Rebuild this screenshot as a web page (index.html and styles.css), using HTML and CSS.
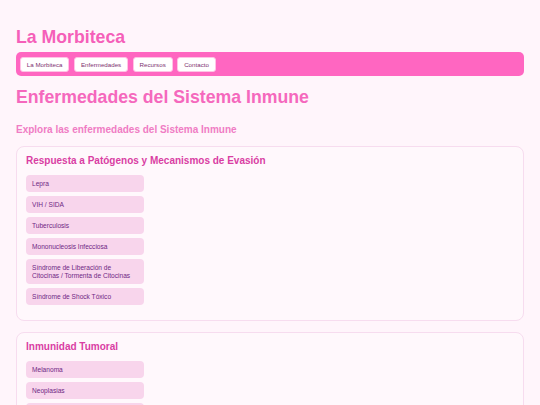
FILE: index.html
```html
<!DOCTYPE html>
<html lang="es">
<head>
<meta charset="utf-8">
<title>La Morbiteca</title>
<link rel="stylesheet" href="styles.css">
</head>
<body>
<header class="site-header">
  <div class="site-title">La Morbiteca</div>
  <nav class="nav">
    <a class="nav-btn" href="#">La Morbiteca</a>
    <a class="nav-btn" href="#">Enfermedades</a>
    <a class="nav-btn" href="#">Recursos</a>
    <a class="nav-btn" href="#">Contacto</a>
  </nav>
</header>
<main>
  <h1 class="page-title">Enfermedades del Sistema Inmune</h1>
  <h2 class="page-sub">Explora las enfermedades del Sistema Inmune</h2>

  <section class="card">
    <h3 class="card-title">Respuesta a Patógenos y Mecanismos de Evasión</h3>
    <ul class="list">
      <li class="item">Lepra</li>
      <li class="item">VIH / SIDA</li>
      <li class="item">Tuberculosis</li>
      <li class="item">Mononucleosis Infecciosa</li>
      <li class="item">Síndrome de Liberación de Citocinas / Tormenta de Citocinas</li>
      <li class="item">Síndrome de Shock Tóxico</li>
    </ul>
  </section>

  <section class="card">
    <h3 class="card-title">Inmunidad Tumoral</h3>
    <ul class="list">
      <li class="item">Melanoma</li>
      <li class="item">Neoplasias</li>
      <li class="item item-empty"></li>
    </ul>
  </section>
</main>
</body>
</html>
```

FILE: styles.css
```css
html, body {
  margin: 0;
  padding: 0;
}
body {
  background: #fff5fb;
  font-family: "Liberation Sans", Arial, sans-serif;
  padding: 27px 16px 16px 16px;
}
.site-title {
  font-size: 17.7px;
  font-weight: bold;
  color: #f55fb9;
  line-height: 21px;
}
.nav {
  margin-top: 4px;
  background: #ff66c1;
  border-radius: 5px;
  height: 24px;
  box-sizing: border-box;
  padding: 5px 4px;
  display: flex;
  gap: 4.8px;
}
.nav-btn {
  display: flex;
  align-items: center;
  height: 15px;
  box-sizing: border-box;
  padding: 0 5.8px;
  background: #ffffff;
  border: 1px solid #ffc4e6;
  border-radius: 3px;
  color: #7e2f70;
  font-size: 6.2px;
  text-decoration: none;
}
.page-title {
  margin: 11px 0 0 0;
  font-size: 17.7px;
  line-height: 21px;
  color: #f568bd;
  font-weight: bold;
}
.page-sub {
  margin: 16px 0 0 0;
  font-size: 10px;
  line-height: 12px;
  color: #f07cc4;
  font-weight: bold;
}
.card {
  margin-top: 10px;
  background: #fff8fc;
  border: 1px solid #f7dcef;
  border-radius: 8px;
  padding: 8px 9px 15px 9px;
}
.card + .card {
  margin-top: 11px;
}
.card-title {
  margin: 0;
  font-size: 10px;
  line-height: 12px;
  color: #d93ea3;
  font-weight: bold;
}
.list {
  list-style: none;
  margin: 8px 0 0 0;
  padding: 0;
  display: flex;
  flex-direction: column;
  gap: 4px;
}
.item {
  width: 118px;
  box-sizing: border-box;
  background: #f8d5ec;
  border-radius: 4px;
  padding: 4.5px 6px;
  font-size: 6.6px;
  line-height: 8px;
  color: #6f2884;
}
.item-empty {
  height: 17px;
}
```
